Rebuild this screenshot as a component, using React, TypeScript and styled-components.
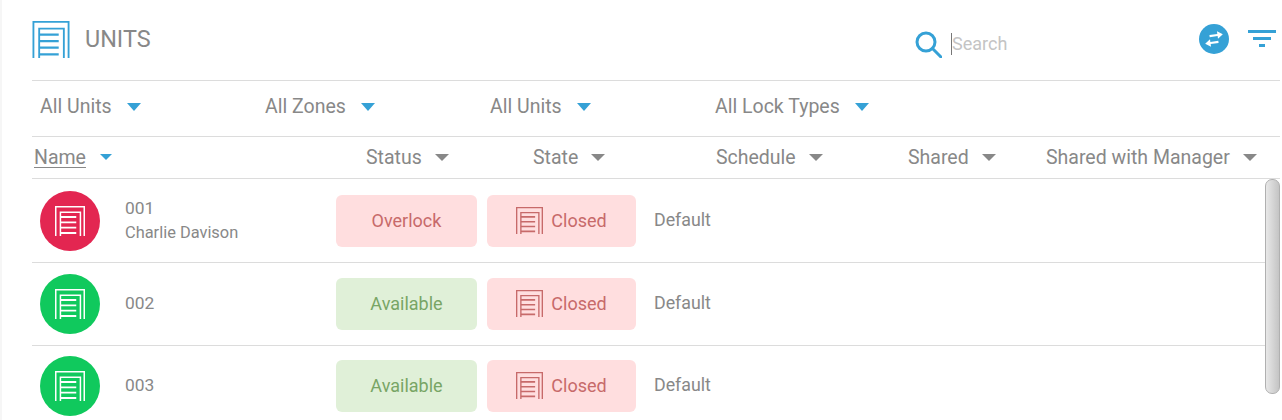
import React from "react";
import styled, { createGlobalStyle } from "styled-components";

const Global = createGlobalStyle`
  html, body { margin: 0; padding: 0; background: #fff; overflow: hidden; }
  * { box-sizing: border-box; }
`;

const BLUE = "#35a1d6";
const TEXT = "#888888";

const Page = styled.div`
  position: relative;
  width: 1282px;
  height: 420px;
  overflow: hidden;
  padding: 0 2px 0 30px;
  border-left: 2px solid #f6f6f6;
  font-family: Roboto, "Liberation Sans", sans-serif;
  color: ${TEXT};
  background: #fff;
`;

const TopBar = styled.header`
  height: 81px;
  border-bottom: 1px solid #dcdcdc;
  display: flex;
`;

const TitleIcon = styled.div`
  width: 38px;
  height: 37px;
  margin-top: 21px;
  color: ${BLUE};
  display: flex;
`;

const Title = styled.h1`
  margin: 24px 0 0 15px;
  width: 70px;
  font-size: 23.4px;
  line-height: 30px;
  font-weight: 400;
  color: ${TEXT};
`;

const SearchArea = styled.div`
  margin-left: 760px;
  display: flex;
  align-items: flex-start;
  padding-top: 31px;
  width: 284px;
`;

const SearchInput = styled.input`
  margin: 2px 0 0 9px;
  width: 200px;
  height: 22px;
  border: 0;
  border-left: 1px solid #777;
  outline: 0;
  padding: 0;
  font: 400 18px/22px Roboto, sans-serif;
  color: ${TEXT};
  background: transparent;
  &::placeholder { color: #c4c4c4; opacity: 1; }
`;

const Actions = styled.div`
  display: flex;
  gap: 19px;
  padding-top: 24px;
  align-items: flex-start;
`;

const FilterGlyph = styled.div`
  padding-top: 6px;
  display: flex;
`;

const FilterRow = styled.div`
  height: 56px;
  border-bottom: 1px solid #dcdcdc;
  padding: 0 0 4px 8px;
  display: grid;
  grid-template-columns: repeat(4, 225px);
  align-items: center;
`;

const FilterItem = styled.div`
  display: flex;
  align-items: center;
  font-size: 19.5px;
  line-height: 50px;
  height: 50px;
`;

const Caret = styled.span<{ $blue?: boolean; $gap: number; $w?: number }>`
  display: inline-block;
  margin-left: ${(p) => p.$gap}px;
  width: 0;
  height: 0;
  border-left: ${(p) => (p.$w ?? 15) / 2}px solid transparent;
  border-right: ${(p) => (p.$w ?? 15) / 2}px solid transparent;
  border-top: ${(p) => ((p.$w ?? 15) * 0.53).toFixed(1)}px solid ${(p) => (p.$blue ? BLUE : "#888")};
`;

const HeaderRow = styled.div`
  height: 42px;
  border-bottom: 1px solid #dcdcdc;
  padding-bottom: 1px;
  display: flex;
  align-items: center;
  font-size: 19.5px;
`;

const HeaderCell = styled.div<{ $left?: number; $w: number }>`
  margin-left: ${(p) => p.$left ?? 0}px;
  width: ${(p) => p.$w}px;
  flex: none;
  display: flex;
  align-items: center;
  white-space: nowrap;
`;

const SortLabel = styled.span`
  text-decoration: underline;
  text-underline-offset: 3px;
  text-decoration-thickness: 1px;
`;

const Row = styled.div<{ $h: number; $pad: number }>`
  height: ${(p) => p.$h}px;
  border-bottom: 1px solid #dcdcdc;
  display: flex;
  align-items: flex-start;
  padding: ${(p) => p.$pad}px 0 0 8px;
`;

const Avatar = styled.div<{ $color: string }>`
  width: 60px;
  height: 60px;
  border-radius: 50%;
  background: ${(p) => p.$color};
  color: #fff;
  display: flex;
  align-items: center;
  justify-content: center;
  flex: none;
`;

const AvatarIcon = styled.div`
  width: 30px;
  height: 30px;
  display: flex;
`;

const NameCol = styled.div`
  width: 211px;
  margin-left: 25px;
  flex: none;
  height: 60px;
  display: flex;
  flex-direction: column;
  justify-content: center;
`;

const UnitNo = styled.div`
  font-size: 17.4px;
  line-height: 24px;
  margin-top: -3px;
`;

const Tenant = styled.div`
  font-size: 16.4px;
  line-height: 22px;
  margin-top: 2px;
`;

const Badge = styled.div<{ $tone: "red" | "green"; $w: number }>`
  flex: none;
  width: ${(p) => p.$w}px;
  height: 52px;
  margin-top: 4px;
  margin-right: 10px;
  padding-bottom: 2px;
  border-radius: 6px;
  background: ${(p) => (p.$tone === "red" ? "#ffdedf" : "#e0f0d8")};
  color: ${(p) => (p.$tone === "red" ? "#c76a6a" : "#78a565")};
  display: flex;
  align-items: center;
  justify-content: center;
  gap: 8px;
  font-size: 18px;
`;

const BadgeIcon = styled.div`
  width: 27px;
  height: 27px;
  display: flex;
`;

const Schedule = styled.div`
  margin: 4px 0 0 8px;
  height: 50px;
  line-height: 50px;
  font-size: 17.8px;
`;

const Scrollbar = styled.div`
  position: absolute;
  left: 1263px;
  top: 179px;
  width: 15px;
  height: 215px;
  border: 1px solid #b0b0b0;
  border-radius: 7px;
  background: linear-gradient(90deg, #e8e8e8, #c4c4c4);
`;

const DoorIcon = () => (
  <svg width="100%" height="100%" viewBox="0 0 36 36" fill="none" stroke="currentColor" strokeWidth="1.8">
    <path d="M.9 36V.9H35.1V36" />
    <path d="M6.5 36V7.4H30.5V36" />
    <path d="M6.5 13.2H25.5M6.5 19.6H25.5M6.5 26H25.5M6.5 32.4H25.5" strokeWidth="2.2" />
  </svg>
);

const SearchIcon = () => (
  <svg width="27" height="27" viewBox="0 0 27 27" fill="none" stroke={BLUE} strokeWidth="3">
    <circle cx="11" cy="11" r="9" />
    <path d="M17.5 17.5L26 26" strokeLinecap="round" />
  </svg>
);

const SwapIcon = () => (
  <svg width="30" height="30" viewBox="0 0 30 30">
    <circle cx="15" cy="15" r="15" fill={BLUE} />
    <g transform="rotate(-8 15 15)" fill="#fff">
      <path d="M11 10.4h8V7.8l5.4 3.7-5.4 3.7v-2.6h-8z" />
      <path d="M19 17.4h-8v-2.6l-5.4 3.7 5.4 3.7v-2.6h8z" />
    </g>
  </svg>
);

const FilterIcon = () => (
  <svg width="28" height="18" viewBox="0 0 28 18" fill={BLUE}>
    <rect x="0" y="0" width="28" height="3" />
    <rect x="5" y="7" width="18" height="3" />
    <rect x="11" y="14" width="6" height="3" />
  </svg>
);

const filters = ["All Units", "All Zones", "All Units", "All Lock Types"];
const columns = [
  { label: "Status", w: 167 },
  { label: "State", w: 183 },
  { label: "Schedule", w: 192 },
  { label: "Shared", w: 138 },
  { label: "Shared with Manager", w: 220 },
];

const rows = [
  { no: "001", tenant: "Charlie Davison", status: "Overlock", h: 84, pad: 12 },
  { no: "002", tenant: "", status: "Available", h: 83, pad: 11 },
  { no: "003", tenant: "", status: "Available", h: 83, pad: 10 },
];

export default function App() {
  return (
    <Page>
      <Global />
      <TopBar>
        <TitleIcon><DoorIcon /></TitleIcon>
        <Title>UNITS</Title>
        <SearchArea>
          <SearchIcon />
          <SearchInput placeholder="Search" readOnly />
        </SearchArea>
        <Actions>
          <SwapIcon />
          <FilterGlyph><FilterIcon /></FilterGlyph>
        </Actions>
      </TopBar>
      <FilterRow>
        {filters.map((f, i) => (
          <FilterItem key={i}>
            {f}
            <Caret $blue $gap={15} />
          </FilterItem>
        ))}
      </FilterRow>
      <HeaderRow>
        <HeaderCell $left={2} $w={332}>
          <SortLabel>Name</SortLabel>
          <Caret $blue $gap={14} $w={13} />
        </HeaderCell>
        {columns.map((c) => (
          <HeaderCell key={c.label} $w={c.w}>
            {c.label}
            <Caret $gap={13} $w={14} />
          </HeaderCell>
        ))}
      </HeaderRow>
      {rows.map((r) => (
        <Row key={r.no} $h={r.h} $pad={r.pad}>
          <Avatar $color={r.status === "Overlock" ? "#e32651" : "#10c95d"}>
            <AvatarIcon><DoorIcon /></AvatarIcon>
          </Avatar>
          <NameCol>
            <UnitNo>{r.no}</UnitNo>
            {r.tenant && <Tenant>{r.tenant}</Tenant>}
          </NameCol>
          <Badge $tone={r.status === "Overlock" ? "red" : "green"} $w={141}>{r.status}</Badge>
          <Badge $tone="red" $w={149}>
            <BadgeIcon><DoorIcon /></BadgeIcon>
            Closed
          </Badge>
          <Schedule>Default</Schedule>
        </Row>
      ))}
      <Scrollbar />
    </Page>
  );
}
